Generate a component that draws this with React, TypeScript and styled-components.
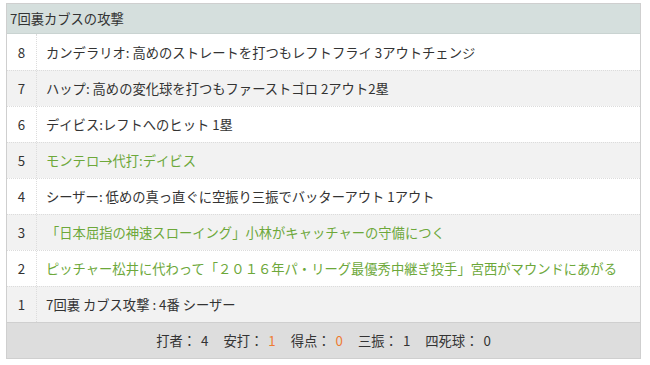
import React from "react";
import styled, { createGlobalStyle } from "styled-components";

type Play = {
  no: number;
  text: string;
  change?: boolean;
};

const plays: Play[] = [
  { no: 8, text: "カンデラリオ: 高めのストレートを打つもレフトフライ 3アウトチェンジ" },
  { no: 7, text: "ハップ: 高めの変化球を打つもファーストゴロ 2アウト2塁" },
  { no: 6, text: "デイビス:レフトへのヒット 1塁" },
  { no: 5, text: "モンテロ→代打:デイビス", change: true },
  { no: 4, text: "シーザー: 低めの真っ直ぐに空振り三振でバッターアウト 1アウト" },
  { no: 3, text: "「日本屈指の神速スローイング」小林がキャッチャーの守備につく", change: true },
  { no: 2, text: "ピッチャー松井に代わって「２０１６年パ・リーグ最優秀中継ぎ投手」宮西がマウンドにあがる", change: true },
  { no: 1, text: "7回裏 カブス攻撃 : 4番 シーザー" },
];

const stats = [
  { label: "打者", value: 4, hot: false },
  { label: "安打", value: 1, hot: true },
  { label: "得点", value: 0, hot: true },
  { label: "三振", value: 1, hot: false },
  { label: "四死球", value: 0, hot: false },
];

const GlobalStyle = createGlobalStyle`
  body {
    margin: 0;
    padding: 3px 9px 8px 6px;
    background: #fff;
    font-family: "Noto Sans CJK JP", "Noto Sans", sans-serif;
    color: #333;
  }
`;

const App = () => {
  return (
    <>
      <GlobalStyle />
      <Board>
        <Head>7回裏カブスの攻撃</Head>
        {plays.map((p, i) => (
          <Row key={p.no} $odd={i % 2 === 1}>
            <Num>{p.no}</Num>
            <Text $change={p.change}>{p.text}</Text>
          </Row>
        ))}
        <Footer>
          {stats.map((s) => (
            <Stat key={s.label}>
              {s.label}：<Value $hot={s.hot}>{s.value}</Value>
            </Stat>
          ))}
        </Footer>
      </Board>
    </>
  );
};

export default App;

const Board = styled.div`
  width: 633px;
  border: 1px solid #cfcfcf;
  font-size: 13.3px;
`;
const Head = styled.div`
  height: 30px;
  line-height: 29px;
  padding-left: 3px;
  background: #d5dfdd;
  border-bottom: 1px solid #c9d3d1;
  box-sizing: border-box;
`;
const Row = styled.div<{ $odd: boolean }>`
  display: grid;
  grid-template-columns: 30px 1fr;
  height: 36px;
  box-sizing: border-box;
  background: ${({ $odd }) => ($odd ? "#f2f2f2" : "#fff")};
  & + & {
    border-top: 1px dotted #dcdcdc;
  }
`;
const Num = styled.div`
  display: flex;
  align-items: center;
  justify-content: center;
  border-right: 1px dotted #dcdcdc;
`;
const Text = styled.div<{ $change?: boolean }>`
  display: flex;
  align-items: center;
  padding-left: 9px;
  white-space: nowrap;
  color: ${({ $change }) => ($change ? "#6da83a" : "#333")};
`;
const Footer = styled.div`
  height: 36px;
  display: flex;
  align-items: center;
  justify-content: center;
  gap: 15px;
  background: #dddddd;
  border-top: 1px solid #cfcfcf;
  box-sizing: border-box;
`;
const Stat = styled.span`
  white-space: pre;
`;
const Value = styled.span<{ $hot: boolean }>`
  margin-left: 5px;
  color: ${({ $hot }) => ($hot ? "#ee7b32" : "#333")};
`;
